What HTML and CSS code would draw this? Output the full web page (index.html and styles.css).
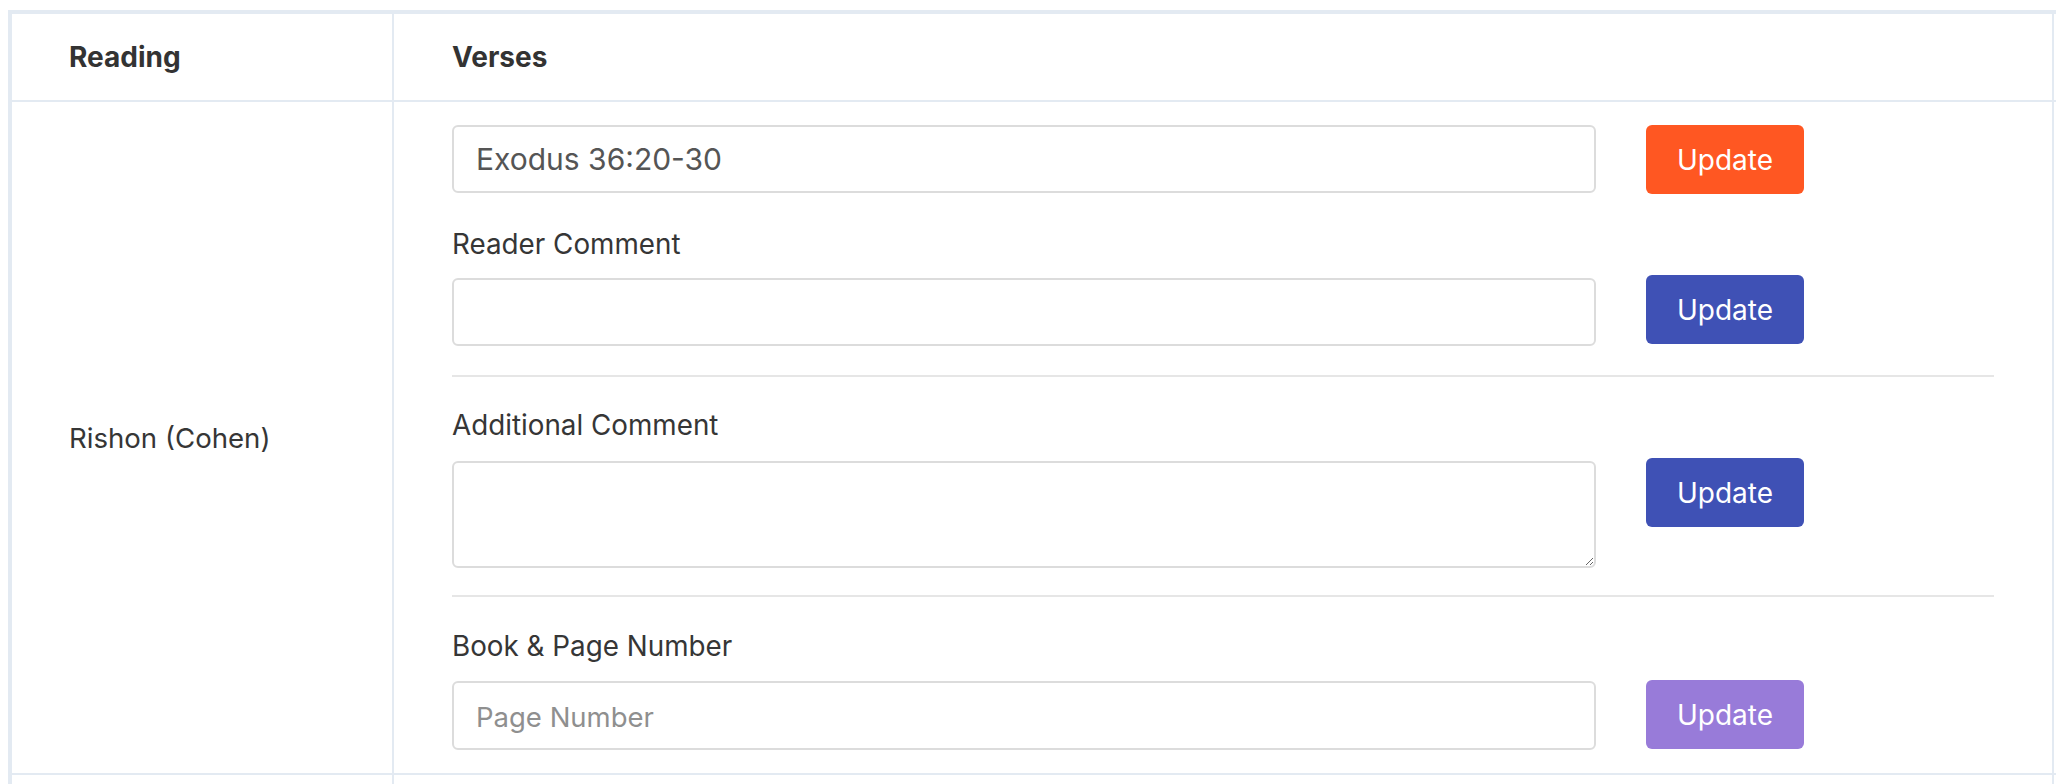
FILE: index.html
```html
<!DOCTYPE html>
<html lang="en">
<head>
<meta charset="utf-8">
<title>Readings</title>
<link rel="stylesheet" href="styles.css">
</head>
<body>
<div class="table">
  <div class="cell head c1">Reading</div>
  <div class="cell head c2">Verses</div>
  <div class="cell head c3"></div>

  <div class="cell body c1 reading">Rishon (Cohen)</div>
  <div class="cell body c2 verses">
    <div class="field-row first">
      <input class="control" type="text" value="Exodus 36:20-30">
      <button class="btn btn-orange" type="button">Update</button>
    </div>

    <label class="label">Reader Comment</label>
    <div class="field-row">
      <input class="control" type="text" value="">
      <button class="btn btn-indigo raise" type="button">Update</button>
    </div>

    <hr class="divider">

    <label class="label">Additional Comment</label>
    <div class="field-row">
      <textarea class="control area"></textarea>
      <button class="btn btn-indigo raise" type="button">Update</button>
    </div>

    <hr class="divider">

    <label class="label last-label">Book &amp; Page Number</label>
    <div class="field-row">
      <input class="control tall" type="text" placeholder="Page Number">
      <button class="btn btn-purple raise-sm" type="button">Update</button>
    </div>
  </div>
  <div class="cell body c3"></div>

  <div class="cell next c1"></div>
  <div class="cell next c2"></div>
  <div class="cell next c3"></div>
</div>
</body>
</html>
```

FILE: styles.css
```css
html, body {
  margin: 0;
  padding: 0;
  background: #ffffff;
}

body {
  padding: 10px 0 0 8px;
  overflow: hidden;
  height: 784px;
  box-sizing: border-box;
  font-family: Inter, "Liberation Sans", Arial, sans-serif;
  color: #363636;
}

.table {
  display: grid;
  grid-template-columns: 382px 1660px 60px;
  width: 2106px;
  border-top: 4px solid #e3eaf2;
  border-left: 4px solid #e3eaf2;
}

.cell {
  box-sizing: border-box;
  border-right: 2px solid #e3eaf2;
  border-bottom: 2px solid #e3eaf2;
}

.head {
  height: 88px;
  display: flex;
  align-items: center;
  font-weight: 700;
  font-size: 28px;
  color: #333333;
}

.head.c1 { padding-left: 57px; }
.head.c2 { padding-left: 58px; }

.reading {
  display: flex;
  align-items: center;
  padding-left: 57px;
  font-size: 27.6px;
  color: #363636;
}

.verses {
  padding: 23px 58px 23px 58px;
  display: flex;
  flex-direction: column;
}

.field-row {
  display: grid;
  grid-template-columns: 1144px 158px;
  column-gap: 50px;
  align-items: start;
}

.label {
  display: block;
  font-size: 27.8px;
  line-height: 42px;
  margin-top: 29px;
  margin-bottom: 13px;
  color: #363636;
}

.divider + .label {
  margin-top: 27px;
  margin-bottom: 15px;
}

.divider + .last-label {
  margin-top: 28px;
  margin-bottom: 14px;
}

.control {
  box-sizing: border-box;
  width: 100%;
  height: 68px;
  margin: 0;
  padding: 0 22px;
  border: 2px solid #dcdcdc;
  border-radius: 6px;
  background: #ffffff;
  font-family: Inter, "Liberation Sans", Arial, sans-serif;
  font-size: 30px;
  color: #555555;
  outline: none;
}

.control.tall { height: 69px; }

.control::placeholder {
  color: #8f8f8f;
  font-size: 27.5px;
}

.area {
  height: 107px;
  display: block;
  resize: vertical;
}

.btn {
  box-sizing: border-box;
  width: 158px;
  height: 69px;
  border: none;
  border-radius: 6px;
  padding: 0;
  font-family: Inter, "Liberation Sans", Arial, sans-serif;
  font-size: 28px;
  color: #ffffff;
  cursor: pointer;
}

.raise { margin-top: -3px; }
.raise-sm { margin-top: -1px; }

.btn-orange { background: #ff5722; }
.btn-indigo { background: #3f51b5; }
.btn-purple { background: #987bd9; }

.divider {
  border: none;
  border-top: 2px solid #e6e6e6;
  margin: 29px 0 0 0;
  height: 0;
}

.divider:last-of-type { margin-top: 27px; }

.next {
  height: 40px;
}
```
